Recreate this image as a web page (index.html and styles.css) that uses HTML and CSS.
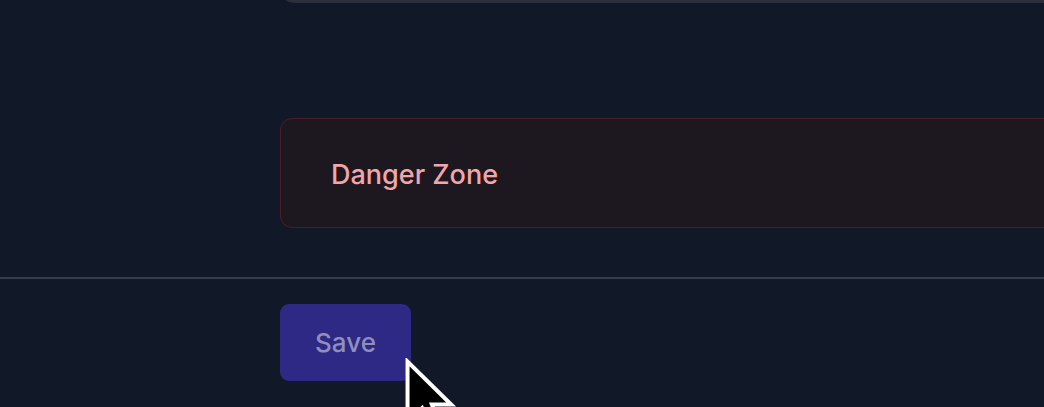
FILE: index.html
```html
<!DOCTYPE html>
<html lang="en">
<head>
<meta charset="utf-8">
<title>Settings</title>
<link rel="stylesheet" href="styles.css">
</head>
<body>
<div class="page">
  <div class="content">
    <div class="card-tail"></div>
    <section class="danger">
      <h2 class="danger-title">Danger Zone</h2>
    </section>
  </div>
  <footer class="footer">
    <div class="footer-inner">
      <button class="save" type="button">Save</button>
    </div>
  </footer>
  <svg class="cursor" width="60" height="80" viewBox="0 0 16 22" aria-hidden="true">
    <path d="M1 1 L1 17.5 L5 13.8 L7.6 20 L10.2 18.9 L7.7 12.8 L13 12.8 Z" fill="#000" stroke="#fff" stroke-width="1.1" stroke-linejoin="miter"/>
  </svg>
</div>
</body>
</html>
```

FILE: styles.css
```css
* { box-sizing: border-box; }
html, body {
  margin: 0;
  padding: 0;
  background: #111827;
  height: 100%;
  overflow: hidden;
}
body {
  font-family: "Inter", "Open Sans", sans-serif;
}
.page {
  position: relative;
  width: 1044px;
  height: 407px;
  overflow: hidden;
}
.content {
  padding-left: 280px;
}
.card-tail {
  height: 23px;
  margin-top: -20px;
  background: #2a2f3b;
  border-radius: 0 0 0 14px;
}
.danger {
  margin-top: 115px;
  height: 110px;
  margin-right: -20px;
  border: 1.5px solid #4d1c29;
  border-radius: 12px;
  background: #1d1720;
  display: flex;
  align-items: center;
  padding-left: 50px;
}
.danger-title {
  margin: 0 0 -2px;
  font-size: 27px;
  font-weight: 500;
  color: #f3a6a9;
  letter-spacing: 0;
}
.footer {
  margin-top: 49px;
  border-top: 2px solid #363c4a;
}
.footer-inner {
  padding: 25px 0 0 280px;
}
.save {
  width: 131px;
  height: 77px;
  border: none;
  border-radius: 9px;
  background: #2d2985;
  color: #908ebb;
  font-family: "Inter", "Open Sans", sans-serif;
  font-size: 26px;
  font-weight: 500;
  padding: 0;
  display: flex;
  align-items: center;
  justify-content: center;
}
.cursor {
  position: absolute;
  left: 403px;
  top: 358px;
}
```
